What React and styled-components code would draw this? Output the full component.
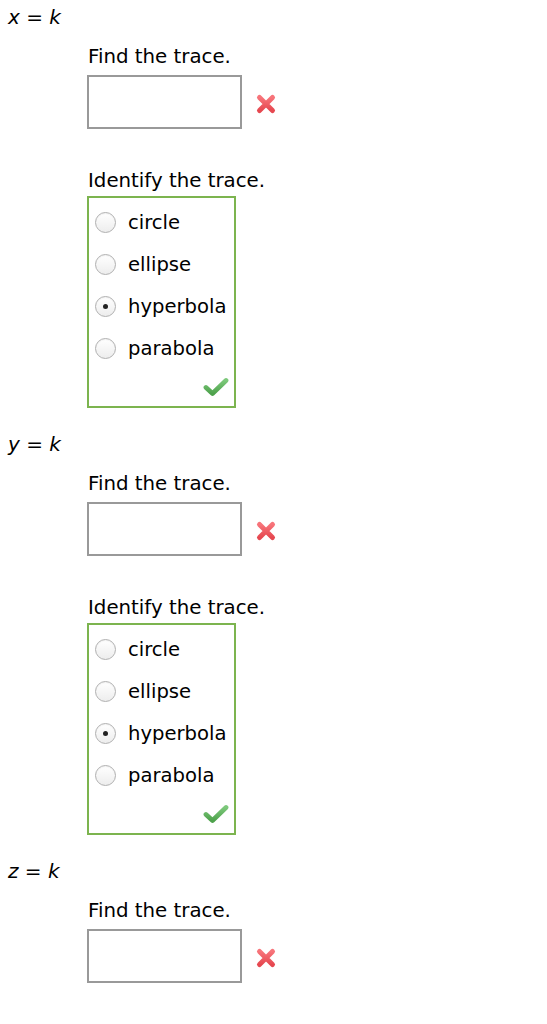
import React from "react";
import styled, { createGlobalStyle } from "styled-components";

const Global = createGlobalStyle`
  body {
    margin: 0;
    background: #fff;
    font-family: "DejaVu Sans", Verdana, sans-serif;
    color: #000;
  }
`;

const Page = styled.div`
  padding-top: 5px;
`;

const Section = styled.section`
  padding-bottom: 24px;
`;

const VarLabel = styled.div`
  padding-left: 8px;
  font-size: 20px;
  line-height: 24px;
  em {
    font-style: italic;
  }
`;

const Body = styled.div`
  margin-left: 87px;
  padding-top: 16px;
`;

const Prompt = styled.div`
  font-size: 19.8px;
  line-height: 24px;
  padding-left: 1px;
  margin-top: ${(p) => p.$top || 0}px;
`;

const AnswerRow = styled.div`
  display: flex;
  align-items: center;
  margin-top: 6px;
`;

const TextBox = styled.input`
  box-sizing: border-box;
  width: 155px;
  height: 54px;
  border: 2px solid #999;
  margin: 0;
  padding: 4px;
  font-size: 18px;
  outline: none;
`;

const Mark = styled.span`
  display: flex;
  margin-left: 13px;
  margin-top: 3px;
`;

const ChoiceBox = styled.div`
  box-sizing: border-box;
  width: 149px;
  margin-top: 3px;
  border: 2px solid #7cb44f;
  padding-top: 3px;
`;

const Option = styled.label`
  display: flex;
  align-items: center;
  height: 42px;
  padding-left: 6px;
  font-size: 19.6px;
`;

const Radio = styled.span`
  box-sizing: border-box;
  width: 21px;
  height: 21px;
  border-radius: 50%;
  border: 1px solid #b0b0b0;
  background: linear-gradient(#ffffff, #ededed);
  box-shadow: inset 0 1px 1px rgba(0, 0, 0, 0.05);
  display: flex;
  align-items: center;
  justify-content: center;
  margin-right: 12px;
  &::after {
    content: "";
    width: 5px;
    height: 5px;
    border-radius: 50%;
    background: ${(p) => (p.$checked ? "#222" : "transparent")};
  }
`;

const Footer = styled.div`
  height: 37px;
  display: flex;
  justify-content: flex-end;
  align-items: flex-end;
  padding: 0 5px 9px 0;
  box-sizing: border-box;
`;

const Cross = () => (
  <svg width="22" height="22" viewBox="0 0 22 22">
    <defs>
      <linearGradient id="xg" x1="0" y1="0" x2="0" y2="1">
        <stop offset="0" stopColor="#f7747a" />
        <stop offset="1" stopColor="#e64850" />
      </linearGradient>
    </defs>
    <path
      d="M4.5 4.5 L17.5 17.5 M17.5 4.5 L4.5 17.5"
      stroke="url(#xg)"
      strokeWidth="5"
      strokeLinecap="round"
      fill="none"
    />
  </svg>
);

const Check = () => (
  <svg width="26" height="20" viewBox="0 0 26 20">
    <defs>
      <linearGradient id="cg" x1="0" y1="0" x2="0" y2="1">
        <stop offset="0" stopColor="#7cc87a" />
        <stop offset="1" stopColor="#4ea24c" />
      </linearGradient>
    </defs>
    <path
      d="M3 10.5 L9.5 16.5 L23 3.5"
      stroke="url(#cg)"
      strokeWidth="4.8"
      strokeLinecap="round"
      strokeLinejoin="round"
      fill="none"
    />
  </svg>
);

const choices = ["circle", "ellipse", "hyperbola", "parabola"];

function Trace({ name, identify }) {
  return (
    <Section>
      <VarLabel>
        <em>{name}</em> = <em>k</em>
      </VarLabel>
      <Body>
        <Prompt>Find the trace.</Prompt>
        <AnswerRow>
          <TextBox type="text" />
          <Mark>
            <Cross />
          </Mark>
        </AnswerRow>
        {identify && (
          <>
            <Prompt $top={40}>Identify the trace.</Prompt>
            <ChoiceBox>
              {choices.map((c) => (
                <Option key={c}>
                  <Radio $checked={c === "hyperbola"} />
                  {c}
                </Option>
              ))}
              <Footer>
                <Check />
              </Footer>
            </ChoiceBox>
          </>
        )}
      </Body>
    </Section>
  );
}

export default function App() {
  return (
    <Page>
      <Global />
      <Trace name="x" identify />
      <Trace name="y" identify />
      <Trace name="z" />
    </Page>
  );
}
